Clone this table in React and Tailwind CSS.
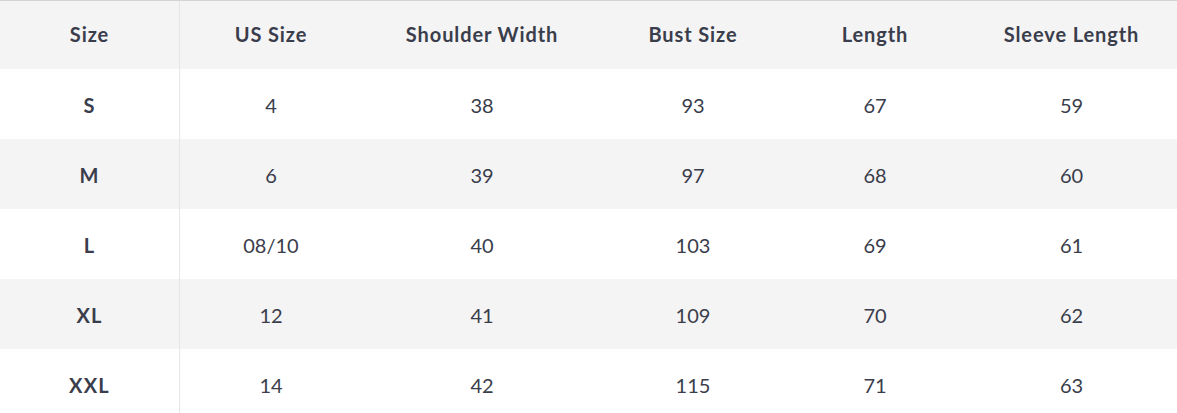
const COLUMNS = ['Size', 'US Size', 'Shoulder Width', 'Bust Size', 'Length', 'Sleeve Length'];

const ROWS = [
  ['S', '4', '38', '93', '67', '59'],
  ['M', '6', '39', '97', '68', '60'],
  ['L', '08/10', '40', '103', '69', '61'],
  ['XL', '12', '41', '109', '70', '62'],
  ['XXL', '14', '42', '115', '71', '63'],
];

const GRID = 'grid grid-cols-[180px_182px_240px_182px_182px_211px]';

export default function App() {
  return (
    <div className="w-[1177px] h-[413px] overflow-hidden bg-white text-[#3a3d4b] font-['Lato',sans-serif] text-[20px]">
      <div className="border-t border-[#d4d4d4]">
        <div className={`${GRID} h-[68px] bg-[#f4f4f4]`}>
          {COLUMNS.map((c, i) => (
            <div
              key={c}
              className={`flex items-center justify-center pb-[3px] font-bold tracking-[0.9px] ${i === 0 ? 'border-r border-[#e6e6e6]' : ''}`}
            >
              {c}
            </div>
          ))}
        </div>
        {ROWS.map((row, r) => (
          <div key={row[0]} className={`${GRID} h-[70px] ${r % 2 === 1 ? 'bg-[#f4f4f4]' : 'bg-white'}`}>
            {row.map((v, i) => (
              <div
                key={i}
                className={`flex items-center justify-center pt-[1px] ${i === 0 ? 'font-bold tracking-[1.2px] border-r border-[#e6e6e6]' : ''}`}
              >
                {v}
              </div>
            ))}
          </div>
        ))}
      </div>
    </div>
  );
}
